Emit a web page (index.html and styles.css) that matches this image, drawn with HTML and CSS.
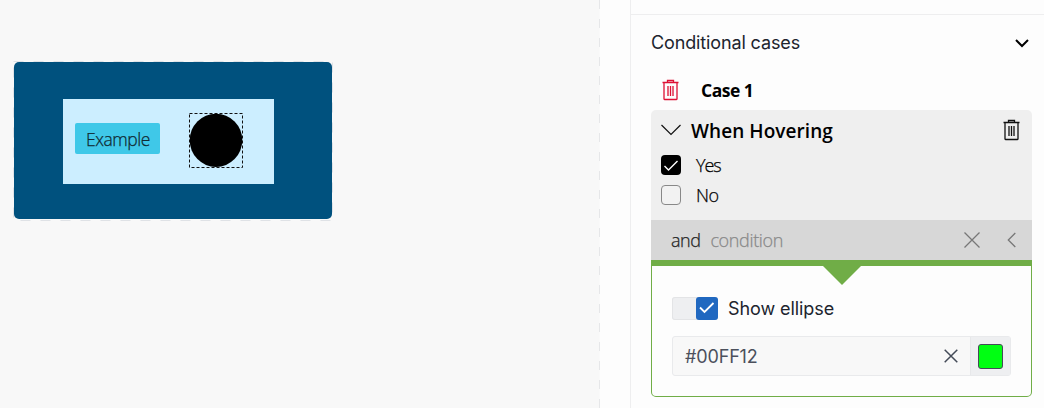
FILE: index.html
```html
<!DOCTYPE html>
<html lang="en">
<head>
<meta charset="utf-8">
<title>Conditional cases</title>
<link rel="stylesheet" href="styles.css">
</head>
<body>
<main class="editor">
  <section class="canvas">
    <div class="frame">
      <svg class="frame-outline" width="320" height="160"><rect x=".5" y=".5" width="319" height="159" fill="none" stroke="#dfe2e6" stroke-dasharray="10 10"/></svg>
      <div class="shape">
        <div class="group">
          <div class="sample"><span class="t-example">Example</span></div>
          <svg class="ellipse" width="54" height="55" viewBox="0 0 54 55"><ellipse cx="27" cy="27.3" rx="26.3" ry="26.6"/><rect x=".5" y=".5" width="53" height="54" fill="none" stroke="#111" stroke-dasharray="3 2"/></svg>
        </div>
      </div>
    </div>
  </section>
  <div class="gutter"></div>
  <aside class="panel">
    <header class="panel-head">
      <span class="t-title">Conditional cases</span>
      <svg width="20" height="20" viewBox="0 0 20 20" fill="none" stroke="#000" stroke-width="2"><path d="M4 7l6 6 6-6"/></svg>
    </header>
    <div class="case-row">
      <svg class="trash red" width="18" height="22" viewBox="0 0 18 22"><path d="M.5 3.500h16M5.500 3V1.500h6V3M2 4v16q0 .5.5.5h12q.5 0 .5-.5V4M6 7v10M8.500 7v10M11 7v10"/></svg>
      <span class="t-case">Case 1</span>
    </div>
    <div class="card">
      <div class="condition">
        <div class="condition-head">
          <svg width="20" height="12" viewBox="0 0 20 12" fill="none" stroke="#111" stroke-width="1.2"><path d="M.5 1l9.500 9.500L19.500 1"/></svg>
          <span class="t-when">When Hovering</span>
          <svg class="trash" width="18" height="22" viewBox="0 0 18 22"><path d="M.5 3.500h16M5.500 3V1.500h6V3M2 4v16q0 .5.5.5h12q.5 0 .5-.5V4M6 7v10M8.500 7v10M11 7v10"/></svg>
        </div>
        <div class="option"><span class="check on"><svg width="20" height="20" viewBox="0 0 20 20" fill="none" stroke="#fff" stroke-width="1.4"><path d="M3.500 11l4 4 9-9"/></svg></span><span class="t-yes">Yes</span></div>
        <div class="option"><span class="check"></span><span class="t-no">No</span></div>
      </div>
      <div class="and-row">
        <span class="t-and">and</span><span class="t-cond">condition</span>
        <svg class="and-clear" width="16" height="16" viewBox="0 0 16 16"><path d="M.5.5l15 15M15.500.5l-15 15"/></svg>
        <svg class="and-back" width="10" height="16" viewBox="0 0 10 16"><path d="M8.300 1l-7 7 7 7"/></svg>
      </div>
      <div class="result">
        <svg class="pointer" width="38" height="19" viewBox="0 0 38 19"><path d="M0 0h38L19 19z" fill="#70ad47"/></svg>
        <div class="toggle-row">
          <span class="toggle"><span class="knob"><svg width="22" height="23" viewBox="0 0 22 23" fill="none" stroke="#fff" stroke-width="1.800"><path d="M4 10.500l4.500 4.500 9-9"/></svg></span></span>
          <span class="t-show">Show ellipse</span>
        </div>
        <div class="field">
          <span class="t-hex">#00FF12</span>
          <svg class="field-clear" width="14" height="14" viewBox="0 0 14 14"><path d="M.7.7l12.600 12.600M13.300.7L.7 13.300"/></svg>
          <span class="picker"><span class="swatch"></span></span>
        </div>
      </div>
    </div>
  </aside>
</main>
</body>
</html>
```
FILE: styles.css
```css
* { box-sizing: border-box; }
body { margin: 0; background: #fdfdfd; font-family: "Open Sans", "Noto Sans", sans-serif; color: #000; }
svg { display: block; flex: none; }
span { white-space: nowrap; }
.editor { display: flex; width: 1044px; height: 408px; overflow: hidden; }
.canvas { width: 600px; padding: 61px 0 0 13px; background: repeating-linear-gradient(to bottom, #e6e7e9 0 9px, #fafafa 9px 19px) right / 1px 100% no-repeat #f8f8f8; }
.frame { position: relative; width: 320px; height: 160px; padding: 1px; }
.frame-outline { position: absolute; left: 0; top: 0; }
.shape { position: relative; width: 318px; height: 157px; padding: 37px 49px; background: #00517e; border-radius: 5px; }
.group { display: flex; width: 211px; height: 85px; padding: 14px 12px; background: #cceeff; }
.sample { width: 85px; height: 31px; margin: 10px 29px 0 0; padding-left: 10px; border-radius: 2px; background: #3fc8e8; line-height: 32px; }
.gutter { width: 30px; }
.panel { width: 414px; padding: 14px 12px 0 20px; border-left: 1px solid #eeeeef; }
.panel-head { display: flex; align-items: center; justify-content: space-between; height: 56px; margin: 0 -12px 0 -20px; padding: 0 12px 0 20px; border-top: 1px solid #eeeeef; }
.case-row { display: flex; align-items: center; height: 40px; padding-left: 11px; gap: 21px; }
.trash { fill: none; stroke: #111; stroke-width: 1.3; }
.trash.red { stroke: #dd1034; }
.card { width: 381px; height: 287px; }
.condition { height: 110px; padding: 0 11px 0 10px; background: #efefef; border-radius: 5px 5px 0 0; }
.condition-head { display: flex; align-items: center; height: 40px; gap: 10px; }
.condition-head .trash { margin-left: auto; }
.option { display: flex; align-items: center; gap: 15px; height: 30px; }
.check { display: block; width: 20px; height: 20px; border: 1px solid #888; border-radius: 4px; background: #f2f2f2; }
.check.on { border: 0; background: #000; }
.and-row { display: flex; align-items: center; height: 40px; padding: 0 15px 0 20px; background: #d7d7d7; }
.and-row svg { fill: none; stroke: #777; stroke-width: 1.3; }
.t-cond { margin-left: 10px; }
.and-clear { margin-left: auto; }
.and-back { margin-left: 27px; }
.result { position: relative; height: 137px; padding: 31px 20px 20px; border: 1px solid #70ad47; border-top-width: 6px; border-radius: 0 0 5px 5px; }
.pointer { position: absolute; left: 171px; top: 0; }
.toggle-row { display: flex; align-items: center; height: 23px; gap: 10px; }
.toggle { display: flex; justify-content: flex-end; width: 46px; height: 23px; background: #eeeff1; border-radius: 3px; box-shadow: inset 0 0 0 1px #e3e4e6; }
.knob { width: 22px; height: 23px; background: #2068c0; border-radius: 3px; }
.field { display: flex; align-items: center; width: 339px; height: 40px; margin-top: 16px; padding-left: 12px; border: 1px solid #e9eaec; border-radius: 3px; background: #f8f8f8; }
.field-clear { margin: 0 12px 0 auto; fill: none; stroke: #444b58; stroke-width: 1.5; }
.picker { display: flex; align-items: center; justify-content: center; width: 40px; height: 38px; border-left: 1px solid #e7e8ea; background: #eeeff1; }
.swatch { width: 25px; height: 25px; border: 1px solid #454a59; border-radius: 3px; background: #00ff12; }
.t-title, .t-show, .t-hex { font-family: Inter, sans-serif; font-size: 18px; color: #20242e; letter-spacing: -.13px; }
.t-show { letter-spacing: -.08px; }
.t-hex { padding-top: 1px; color: #4b505c; letter-spacing: -.15px; }
.t-example, .t-yes, .t-no, .t-and, .t-cond { font-weight: 300; -webkit-text-stroke: .25px currentColor; }
.t-example { padding-left: 1px; font-size: 17.500px; letter-spacing: -.45px; color: #102a32; }
.t-case { font-size: 17.500px; font-weight: 700; letter-spacing: -.5px; }
.t-when { padding-top: 2px; font-size: 19px; font-weight: 600; letter-spacing: .07px; }
.t-yes, .t-no { font-size: 18px; letter-spacing: -1.1px; }
.t-no { letter-spacing: -.4px; }
.t-and, .t-cond { font-size: 18px; letter-spacing: -.5px; color: #222; }
.t-cond { letter-spacing: -.35px; color: #888; }
```
